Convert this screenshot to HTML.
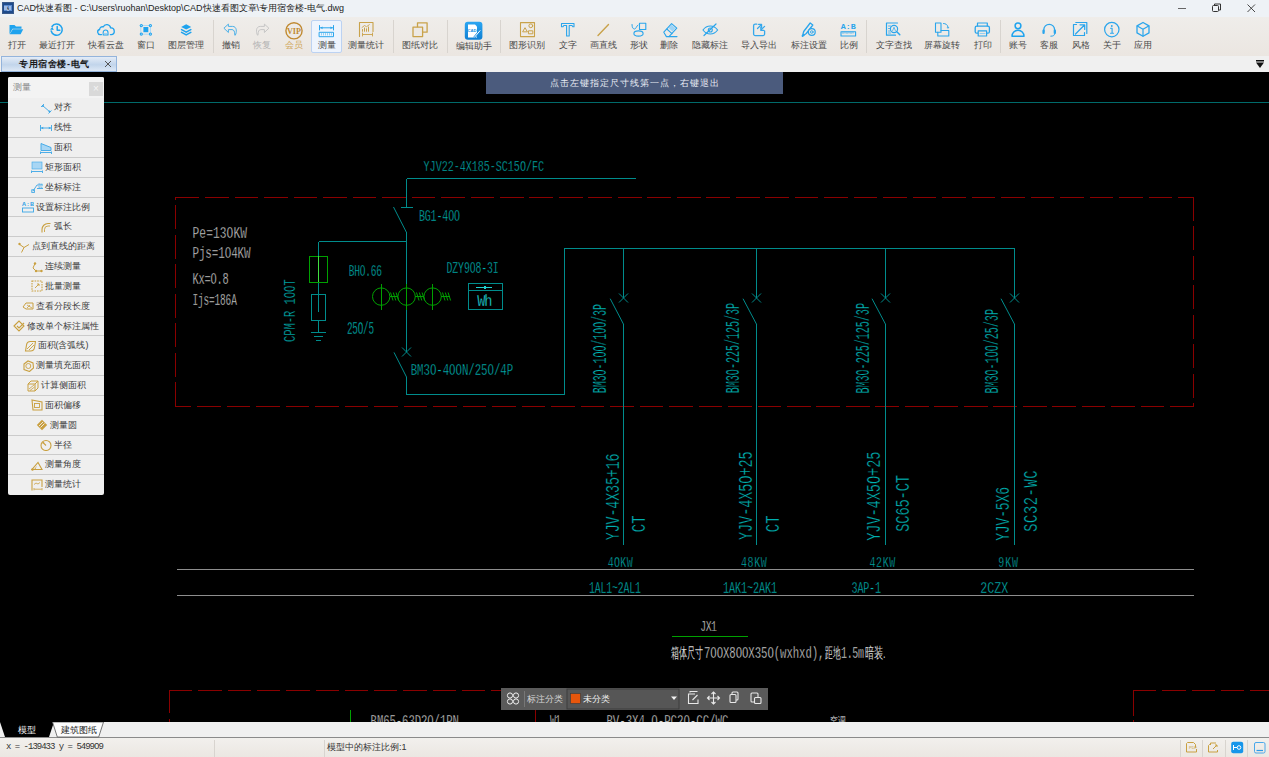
<!DOCTYPE html>
<html><head><meta charset="utf-8">
<style>
*{margin:0;padding:0;box-sizing:border-box}
html,body{width:1269px;height:757px;overflow:hidden;background:#000;font-family:"Liberation Sans",sans-serif}
.abs{position:absolute}
#title{left:0;top:0;width:1269px;height:17px;background:#eef2f6}
#title .t{left:17px;top:2px;font-size:9px;line-height:13px;color:#222;white-space:nowrap}
#tb{left:0;top:17px;width:1269px;height:39px;background:linear-gradient(#efedea,#ebe6e1)}
#tabs{left:0;top:56px;width:1269px;height:16px;background:#f0f0f0}
#canvas{left:0;top:72px;width:1269px;height:650px;background:#000}
.lbl{position:absolute;top:41px;font-size:9px;line-height:9px;color:#4a4a4a;white-space:nowrap;transform:translateX(-50%)}
.sep{position:absolute;top:20px;width:1px;height:33px;background:#d8d4cf}
#active{left:311px;top:20px;width:31px;height:33px;background:#eef4fd;border:1px solid #bcd2f2;border-radius:2px}
#panel{left:8px;top:77px;width:96px;height:418px;background:#efefef;border-radius:2px;overflow:hidden}
#panel .hd{position:absolute;left:0;top:0;width:96px;height:21px;background:#f3f3f3}
#panel .hdt{position:absolute;left:5px;top:6px;font-size:9px;line-height:9px;color:#8a8a8a}
#panel .cls{position:absolute;left:81px;top:5px;width:14px;height:14px;background:#d9d9d9;color:#f4f4f4;font-size:10px;line-height:14px;text-align:center}
#panel .row{position:absolute;left:0;width:96px;height:20px;display:flex;align-items:center;justify-content:center;font-size:9px;line-height:9px;color:#3c3c3c;white-space:nowrap}
#panel .row svg{width:12px;height:12px;margin-right:2px;flex:none}
#btabs{left:0;top:722px;width:1269px;height:16px;background:#f0f0f0;border-bottom:1px solid #8a8a8a}
#status{left:0;top:738px;width:1269px;height:19px;background:linear-gradient(#f2f0ed,#ebe7e2)}
#banner{left:486px;top:72px;width:297px;height:22px;background:#4b5b7d;color:#e8ecf4;font-size:9px;line-height:22px;text-align:center;letter-spacing:1px}
#ftb{left:501px;top:688px;width:267px;height:22px;background:#5a5a5a}
</style></head><body>
<div id="title" class="abs">
  <svg class="abs" style="left:2px;top:2px" width="12" height="12" viewBox="0 0 12 12"><rect x="0.5" y="0.5" width="11" height="11" fill="#1e4a8a" stroke="#3a5a8a"/><rect x="2" y="3" width="8" height="6" fill="#5a8ad0"/><path d="M3 4v4M5 4v4h2M8 4v4" stroke="#fff" stroke-width="0.8"/></svg>
  <div class="t abs">CAD快速看图 - C:\Users\ruohan\Desktop\CAD快速看图文章\专用宿舍楼-电气.dwg</div>
  <svg class="abs" style="left:1170px;top:0" width="99" height="17" viewBox="1170 0 99 17">
    <path d="M1178 8.5h8" stroke="#555" stroke-width="0.9"/>
    <rect x="1212.5" y="5.5" width="6" height="6" rx="1" fill="none" stroke="#333"/>
    <path d="M1214.5 5.5v-1.5h6v6h-1.5" fill="none" stroke="#333"/>
    <path d="M1247.5 4.5l7.5 7.5M1255 4.5l-7.5 7.5" stroke="#333" stroke-width="0.9"/>
  </svg>
</div>
<div id="tb" class="abs"></div>
<div id="tabs" class="abs">
  <div class="abs" style="left:1px;top:0;width:116px;height:16px;border:1px solid #94b4dc;background:linear-gradient(#e4ecf7,#c2d5eb 55%,#dde8f5)"></div>
  <div class="abs" style="left:19px;top:3px;font-size:9px;line-height:10px;color:#1a1a1a;font-weight:bold;letter-spacing:0.6px">专用宿舍楼-电气</div>
  <svg class="abs" style="left:104px;top:4px" width="8" height="8" viewBox="0 0 8 8"><path d="M1 1l6 6M7 1l-6 6" stroke="#555" stroke-width="1"/></svg>
  <svg class="abs" style="left:1255px;top:3px" width="10" height="10" viewBox="0 0 10 10"><rect x="1" y="1" width="8" height="1.5" fill="#111"/><path d="M1 3.5h8l-4 5.5z" fill="#111"/></svg>
</div>
<div id="canvas" class="abs"></div>
<div id="active" class="abs"></div>
<svg class="abs" style="left:0;top:0" width="1269" height="56" viewBox="0 0 1269 56">
<g fill="none" stroke-linecap="round" stroke-linejoin="round">
 <!-- 1 open folder -->
 <path d="M9.5 25h5l1.5 1.5h5.5v2.2h-9L9.5 34z" fill="#1fa3ee"/>
 <path d="M12.8 29.2h10.4l-2.6 5H9.6z" fill="#1fa3ee"/>
 <!-- 2 recent: clock -->
 <path d="M52 26.5A5.6 5.6 0 1 1 51.2 31" stroke="#1fa3ee" stroke-width="1.5"/>
 <path d="M50 29.5l2.4-2.6l1.4 3z" fill="#1fa3ee"/>
 <path d="M57.2 26.6v3.6h2.6" stroke="#1fa3ee" stroke-width="1.5"/>
 <!-- 3 cloud -->
 <path d="M101.5 34.6h-1a2.6 2.6 0 0 1-0.9-5.1a2.8 2.8 0 0 1 3.6-2.6a3.9 3.9 0 0 1 7.4 1a3.3 3.3 0 0 1 0.6 6.7h-0.8" stroke="#1fa3ee" stroke-width="1.3"/>
 <path d="M103.2 35v-2.6a2.4 2.4 0 0 1 4.8 0v2.6z" stroke="#1fa3ee" stroke-width="1.1"/>
 <path d="M103.5 33.6h4.3" stroke="#7cc8f4" stroke-width="0.8"/>
 <!-- 4 window -->
 <rect x="143.4" y="27" width="4.9" height="5.2" fill="#1fa3ee"/>
 <path d="M141.2 25.5h9.3v8.7h-9.3z" stroke="#a6d8f6" stroke-width="0.9"/>
 <circle cx="141.3" cy="25.6" r="1.6" fill="#1fa3ee"/><circle cx="141.3" cy="25.6" r="0.6" fill="#bfe4fa"/><circle cx="150.4" cy="25.6" r="1.6" fill="#1fa3ee"/><circle cx="150.4" cy="25.6" r="0.6" fill="#bfe4fa"/>
 <circle cx="141.3" cy="34.1" r="1.6" fill="#1fa3ee"/><circle cx="141.3" cy="34.1" r="0.6" fill="#bfe4fa"/><circle cx="150.4" cy="34.1" r="1.6" fill="#1fa3ee"/><circle cx="150.4" cy="34.1" r="0.6" fill="#bfe4fa"/>
 <!-- 5 layers -->
 <path d="M186.2 24.2l5 2.7l-5 2.7l-5-2.7z" fill="#1fa3ee"/>
 <path d="M181.6 29.6l4.6 2.5l4.6-2.5" stroke="#1fa3ee" stroke-width="1.6"/>
 <path d="M181.6 32.4l4.6 2.5l4.6-2.5" stroke="#1fa3ee" stroke-width="1.6"/>
 <!-- sep 213 -->
 <!-- 6 undo -->
 <path d="M235.5 34.8C236.8 32.5 237.2 26.4 232.5 26.4H228.4V24.1L223.9 28.2L228.4 32.5V29.6H232C234 29.6 234.8 31.5 234.8 34.8Z" stroke="#45aee8" stroke-width="0.95"/>
 <!-- 7 redo grey -->
 <path d="M257.3 34.8C256 32.5 255.6 26.4 260.3 26.4H264.4V24.1L268.9 28.2L264.4 32.5V29.6H260.8C258.8 29.6 258 31.5 258 34.8Z" stroke="#c4c4c4" stroke-width="0.95"/>
 <!-- 8 VIP -->
 <circle cx="294" cy="30.8" r="8.1" stroke="#c08a32" stroke-width="1.4"/>
 <text x="294" y="34.2" font-family="Liberation Serif" font-weight="bold" font-size="9" fill="#c08a32" text-anchor="middle" stroke="none" textLength="14" lengthAdjust="spacingAndGlyphs">VIP</text>
 <!-- 9 measure -->
 <path d="M319.5 25.5v4.5M333.5 25.5v4.5M320 27.8h13" stroke="#2aa5ec" stroke-width="1"/>
 <path d="M320.5 27.8l2-1.4v2.8zM332.5 27.8l-2-1.4v2.8z" fill="#2aa5ec"/>
 <rect x="319.5" y="32.3" width="14" height="4.4" stroke="#2aa5ec" stroke-width="1"/>
 <path d="M321.5 33.5v1.5M323.5 33.5v1.5M325.5 33.5v1.5M327.5 33.5v1.5M329.5 33.5v1.5M331.5 33.5v1.5" stroke="#7cc6f2" stroke-width="0.8"/>
 <!-- 10 measure stats -->
 <path d="M359.5 36.5v-14h13.5v9" stroke="#c9a24a" stroke-width="1.1"/>
 <path d="M362.5 29.5v1.8M364.5 28v3.3M366.5 28.8v2.5M368.5 27v4.3" stroke="#c9a24a" stroke-width="1"/>
 <path d="M362 27.5l2.5-2l2 1.2l2.8-2" stroke="#c9a24a" stroke-width="0.9"/>
 <path d="M362.5 33v3M372.5 33v3M363 34.5h9" stroke="#c9a24a" stroke-width="0.9"/>
 <!-- sep 393.5 -->
 <!-- 11 compare -->
 <rect x="417.5" y="22.8" width="9.6" height="9.4" stroke="#c9a24a" stroke-width="1.3"/>
 <rect x="413" y="27.2" width="9.6" height="9.4" fill="#ede9e4" stroke="#c9a24a" stroke-width="1.3"/>
 <!-- sep 447.5 -->
 <!-- 12 edit helper -->
 <defs><linearGradient id="gb" x1="0" y1="0" x2="0" y2="1"><stop offset="0" stop-color="#2ba6f2"/><stop offset="1" stop-color="#0f7fd2"/></linearGradient></defs>
 <rect x="464.8" y="21.8" width="17.6" height="18" rx="3" fill="url(#gb)"/>
 <path d="M468 24.5h7l2 2v11h-9z" fill="#fff"/>
 <text x="472" y="32" font-size="4.2" font-weight="bold" fill="#1a8ee0" text-anchor="middle" stroke="none">CAD</text>
 <path d="M474.5 37.2l5.5-6.5" stroke="#1a8ee0" stroke-width="2.2"/>
 <path d="M474.5 37.2l5.5-6.5" stroke="#fff" stroke-width="1"/>
 <!-- sep 500.5 -->
 <!-- 13 shape recog -->
 <rect x="520.5" y="22.6" width="14" height="14" stroke="#c9a24a" stroke-width="1.1"/>
 <path d="M522.8 31.5l2.2-3.8l2.2 3.8z" stroke="#c9a24a" stroke-width="1"/>
 <circle cx="530.8" cy="25.8" r="1.9" stroke="#c9a24a" stroke-width="1"/>
 <rect x="528.8" y="30.8" width="4" height="3" stroke="#c9a24a" stroke-width="1"/>
 <!-- 14 T -->
 <path d="M561.5 23.5h12.5v3.2h-1.2l-0.8-1.2h-2.8v10.5h-2.6v-10.5h-2.8l-0.8 1.2h-1.5z" stroke="#2aa5ec" stroke-width="1.1"/>
 <!-- 15 line -->
 <path d="M598 35.5l10.5-11" stroke="#c9a24a" stroke-width="1.4"/>
 <!-- 16 shapes -->
 <rect x="639.5" y="23.2" width="6.3" height="6.3" stroke="#2aa5ec" stroke-width="1.1"/>
 <ellipse cx="638.5" cy="33.5" rx="4.6" ry="2.6" fill="#ede9e4" stroke="#2aa5ec" stroke-width="1.1"/>
 <path d="M632 24.5c0 3 1 4.5 2.5 4.5c1.5 0 2-3 3.5-4" stroke="#2aa5ec" stroke-width="1"/>
 <!-- 17 eraser -->
 <path d="M663.8 32.2l7.8-8.6l5.2 4.6l-7.8 8.4h-2.6z" stroke="#2aa5ec" stroke-width="1.1"/>
 <path d="M666.8 29l5.2 4.6M669 36.6h8" stroke="#2aa5ec" stroke-width="1.1"/>
 <path d="M671.6 24.8l3.8 3.4l-3 3.2l-3.8-3.4z" fill="#9ed4f6"/>
 <!-- 18 hide annotation eye -->
 <path d="M703 30c2-2.8 4.5-4 7.3-4s5.3 1.2 7.3 4c-2 2.8-4.5 4-7.3 4s-5.3-1.2-7.3-4z" stroke="#2aa5ec" stroke-width="1.2"/>
 <circle cx="710.3" cy="30" r="2" stroke="#2aa5ec" stroke-width="1.1"/>
 <path d="M704 35.5l12-11.5" stroke="#2aa5ec" stroke-width="1.2"/>
 <!-- 19 import export -->
 <path d="M756.8 24.2H755.2a1.6 1.6 0 0 0-1.6 1.6V34a1.6 1.6 0 0 0 1.6 1.6H763a1.6 1.6 0 0 0 1.6-1.6V31" stroke="#35a8ec" stroke-width="1.3"/>
 <path d="M757.5 28.5L761.5 24.5M758.5 24.3H761.6V27.4" stroke="#35a8ec" stroke-width="1.2"/>
 <path d="M764.6 26.3L761 29.9M760.8 27.2V30.4H763.8" stroke="#35a8ec" stroke-width="1.2"/>
 <!-- 20 annotation settings: pen + gear -->
 <path d="M802.5 36l1.2-4.5l6.5-8.5l2.6 2l-6.5 8.5z" stroke="#2aa5ec" stroke-width="1.3"/>
 <path d="M802.5 36l1.3-1" stroke="#2aa5ec" stroke-width="1.8"/>
 <circle cx="811.8" cy="32" r="3.4" fill="#ede9e4" stroke="#2aa5ec" stroke-width="1.2"/>
 <circle cx="811.8" cy="32" r="1.3" stroke="#2aa5ec" stroke-width="0.9"/>
 <!-- 21 scale A:B -->
 <text x="848.3" y="29.2" font-family="Liberation Mono" font-weight="bold" font-size="7" fill="#2aa5ec" stroke="none" text-anchor="middle" textLength="15" lengthAdjust="spacingAndGlyphs">A:B</text>
 <rect x="841" y="31.8" width="14.6" height="4.2" stroke="#2aa5ec" stroke-width="1.1"/>
 <path d="M843 32v1.6M845 32v1.2M847 32v1.6M849 32v1.2M851 32v1.6M853 32v1.2" stroke="#2aa5ec" stroke-width="0.7"/>
 <!-- sep 866.5 -->
 <!-- 22 text find -->
 <path d="M897.5 23h-11v12.2h9" stroke="#2aa5ec" stroke-width="1.2"/>
 <path d="M888.5 26h2M888.5 28.5h1.5M888.5 31h1.5M888.5 33h2" stroke="#2aa5ec" stroke-width="0.8"/>
 <circle cx="894" cy="29" r="3.6" stroke="#2aa5ec" stroke-width="1.2"/>
 <path d="M896.8 31.8l3 3" stroke="#2aa5ec" stroke-width="1.5"/>
 <path d="M892.6 30.8l1.4-3.6l1.4 3.6" stroke="#2aa5ec" stroke-width="0.7"/>
 <!-- 23 screen rotate -->
 <rect x="935.5" y="23" width="5.5" height="9.3" stroke="#2aa5ec" stroke-width="1.1"/>
 <path d="M941 30.5h7.8v5.5h-11v-3.7" stroke="#2aa5ec" stroke-width="1.1"/>
 <path d="M943.5 23.5c2 0 4 1 4.5 3.5" stroke="#2aa5ec" stroke-width="1"/>
 <path d="M946.5 27.5l1.6 1.3l1.3-1.8z" fill="#2aa5ec"/>
 <!-- 24 print -->
 <path d="M977.5 26v-3h9.8v3" stroke="#2aa5ec" stroke-width="1.2"/>
 <rect x="975.2" y="26.2" width="14.2" height="7" rx="1.5" stroke="#2aa5ec" stroke-width="1.3"/>
 <rect x="978.2" y="30.8" width="8.4" height="5.2" fill="#ede9e4" stroke="#2aa5ec" stroke-width="1.2"/>
 <path d="M980 33.5h5" stroke="#7cc6f2" stroke-width="0.8"/>
 <!-- sep 1000 -->
 <!-- 25 account -->
 <circle cx="1018" cy="25.8" r="2.9" stroke="#1fa3ee" stroke-width="1.5"/>
 <path d="M1012 36.3c0-3.4 2.6-6 6-6s6 2.6 6 6z" stroke="#1fa3ee" stroke-width="1.5"/>
 <!-- 26 service headset -->
 <path d="M1043.8 31.5v-1.8a5.4 5.4 0 0 1 10.8 0v1.8" stroke="#2aa5ec" stroke-width="1.3"/>
 <rect x="1042.4" y="29.6" width="2.3" height="4.4" rx="1.1" fill="#2aa5ec"/>
 <rect x="1053.7" y="29.6" width="2.3" height="4.4" rx="1.1" fill="#2aa5ec"/>
 <path d="M1054.6 34c0 1.6-1.4 2.2-3.8 2.2" stroke="#2aa5ec" stroke-width="1"/>
 <!-- 27 style -->
 <path d="M1076.5 24.5h-3v11h11v-3" stroke="#2aa5ec" stroke-width="1.2"/>
 <path d="M1075.8 22.5h11v11" stroke="#2aa5ec" stroke-width="1.2"/>
 <path d="M1075.5 34l9-9M1080 24.8h4.7v4.7" stroke="#2aa5ec" stroke-width="1.2"/>
 <!-- 28 about -->
 <circle cx="1111.8" cy="29.6" r="7.2" stroke="#2aa5ec" stroke-width="1.2"/>
 <circle cx="1111.8" cy="26" r="0.9" fill="#2aa5ec"/>
 <path d="M1110.6 28.3h1.5v5M1110.5 33.3h3" stroke="#2aa5ec" stroke-width="1.1"/>
 <!-- 29 app cube -->
 <path d="M1143 22.5l6 3.4v7l-6 3.4l-6-3.4v-7z" stroke="#2aa5ec" stroke-width="1.3"/>
 <path d="M1137.3 26l5.7 3.2l5.7-3.2M1143 29.2v6.8" stroke="#2aa5ec" stroke-width="1.2"/>
</g>
</svg>
<div class="sep" style="left:213px"></div>
<div class="sep" style="left:393px"></div>
<div class="sep" style="left:447px"></div>
<div class="sep" style="left:500px"></div>
<div class="sep" style="left:866px"></div>
<div class="sep" style="left:1000px"></div>
<div class="lbl" style="left:16.5px">打开</div>
<div class="lbl" style="left:56.8px">最近打开</div>
<div class="lbl" style="left:105.7px">快看云盘</div>
<div class="lbl" style="left:146px">窗口</div>
<div class="lbl" style="left:186.4px">图层管理</div>
<div class="lbl" style="left:230.6px">撤销</div>
<div class="lbl" style="left:261.6px;color:#b4b4b4">恢复</div>
<div class="lbl" style="left:293.6px;color:#d0a860">会员</div>
<div class="lbl" style="left:326.5px">测量</div>
<div class="lbl" style="left:366.4px">测量统计</div>
<div class="lbl" style="left:420px">图纸对比</div>
<div class="lbl" style="left:473.5px;top:42px">编辑助手</div>
<div class="lbl" style="left:527px">图形识别</div>
<div class="lbl" style="left:567.6px">文字</div>
<div class="lbl" style="left:603px">画直线</div>
<div class="lbl" style="left:638.6px">形状</div>
<div class="lbl" style="left:669.3px">删除</div>
<div class="lbl" style="left:710px">隐藏标注</div>
<div class="lbl" style="left:759.4px">导入导出</div>
<div class="lbl" style="left:808.6px">标注设置</div>
<div class="lbl" style="left:849px">比例</div>
<div class="lbl" style="left:893.5px">文字查找</div>
<div class="lbl" style="left:942px">屏幕旋转</div>
<div class="lbl" style="left:982.5px">打印</div>
<div class="lbl" style="left:1017.9px">账号</div>
<div class="lbl" style="left:1049.2px">客服</div>
<div class="lbl" style="left:1080.5px">风格</div>
<div class="lbl" style="left:1111.7px">关于</div>
<div class="lbl" style="left:1142.9px">应用</div>
<svg class="abs" style="left:0;top:72px" width="1269" height="650" viewBox="0 72 1269 650" shape-rendering="crispEdges">
<g fill="none" stroke-width="1">
 <path d="M0 102.5H1269" stroke="#006a6a"/>
 <g stroke="#8a0000" stroke-dasharray="23.6 5.89">
  <path d="M175 197.5H1194" stroke-dashoffset="-0.6"/>
  <path d="M1193.5 197V406"/>
  <path d="M175 406.5H1194" stroke-dashoffset="7.3"/>
  <path d="M175.5 406V197"/>
 </g>
 <g stroke="#8a0000" stroke-dasharray="23.3 6">
  <path d="M169 690.5H520"/>
  <path d="M169.5 690V722"/>
  <path d="M1133 690.5H1269"/>
  <path d="M1133.5 690V722" stroke-dasharray="26 4"/>
 </g>
 <path d="M535.5 710V722" stroke="#8a0000"/>
 <path d="M350.5 710V722" stroke="#00a000"/>
 <path d="M177 569.5H1194M177 595.5H1194" stroke="#8e8e8e"/>
 <path d="M672 636.5H748" stroke="#00a000"/>
 <g stroke="#008c8c">
  <path d="M406.5 178.5H635.5M406.5 178.5V207.5M401 207.5H413"/>
  <path d="M406.5 232V352M406.5 377V394.5H564.5V248.5H1014.5V298"/>
  <path d="M318.5 241.5H406.5M318.5 241.5V256"/>
  <path d="M318.5 282V312M318.5 320V332.5"/>
  <rect x="311.5" y="294.5" width="14" height="26"/>
  <path d="M311 332.5H326M314 336.5H323M316 340.5H321"/>
  <path d="M623.5 248.5V298M623.5 324V545M756.5 248.5V298M756.5 324V545M885.5 248.5V298M885.5 324V545M1014.5 324V545"/>
  <path d="M468.5 283.5H502.5V309.5H468.5ZM468.5 290.5H502.5"/>
 </g>
 <g stroke="#008c8c" shape-rendering="auto">
  <path d="M393.5 207L406.5 232.5"/>
  <path d="M394 352.4L406.5 377"/>
  <path d="M402 347.5L411 356.5M411 347.5L402 356.5"/>
  <path d="M610.2 298.7L623.5 324.2M619 293.5L628 302.5M628 293.5L619 302.5"/>
  <path d="M743 298.7L756.5 324.2M752 293.5L761 302.5M761 293.5L752 302.5"/>
  <path d="M872 298.7L885.5 324.2M881 293.5L890 302.5M890 293.5L881 302.5"/>
  <path d="M1001 298.7L1014.5 324.2M1010 293.5L1019 302.5M1019 293.5L1010 302.5"/>
 </g>
 <path d="M476 287.5H492" stroke="#20d0d0"/>
 <circle cx="485" cy="287.5" r="1.2" fill="#20d0d0" stroke="none"/>
 <g stroke="#00a000">
  <rect x="309.5" y="256.5" width="18" height="26"/>
  <path d="M381.5 284V310M432.5 284V310"/>
  <path d="M390 296.5H398M415 296.5H424M441 296.5H450"/>
 </g>
 <path d="M318.5 256V282" stroke="#40e040"/>
 <path d="M406.5 284V310" stroke="#00a000"/>
 <g stroke="#00a000" shape-rendering="auto">
  <circle cx="381.2" cy="296.6" r="8.7"/>
  <circle cx="406.6" cy="296.6" r="8.7"/>
  <circle cx="432.6" cy="296.6" r="8.7"/>
  <path d="M390.5 292.5l2.5 8M393.3 292.5l2.5 8M396.1 292.5l2.5 8"/>
  <path d="M416.5 292.5l2.5 8M419.3 292.5l2.5 8M422.1 292.5l2.5 8"/>
  <path d="M442.5 292.5l2.5 8M445.3 292.5l2.5 8M448.1 292.5l2.5 8"/>
 </g>
</g>
<g font-family="Liberation Mono" shape-rendering="auto">
<g transform="translate(423.6 171) scale(0.6667529411764707 1)"><text font-size="15.17" textLength="180.58" lengthAdjust="spacing" fill="#00b0b0" stroke="#000" stroke-width="0.35">YJV22-4X185-SC15O/FC</text></g>
<g transform="translate(418.9 220.7) scale(0.6413663272555055 1)"><text font-size="15.63" textLength="64.08" lengthAdjust="spacing" fill="#00b0b0" stroke="#000" stroke-width="0.35">BG1-4OO</text></g>
<g transform="translate(348.7 276) scale(0.6028763736263737 1)"><text font-size="15.78" textLength="55.24" lengthAdjust="spacing" fill="#00b0b0" stroke="#000" stroke-width="0.35">BHO.66</text></g>
<g transform="translate(347 334) scale(0.5335232383808096 1)"><text font-size="17.45" textLength="50.61" lengthAdjust="spacing" fill="#00b0b0" stroke="#000" stroke-width="0.35">25O/5</text></g>
<g transform="translate(446.6 273.3) scale(0.5877873070325901 1)"><text font-size="16.69" textLength="88.47" lengthAdjust="spacing" fill="#00b0b0" stroke="#000" stroke-width="0.35">DZY9O8-3I</text></g>
<g transform="translate(477.3 305.8) scale(0.8 1)"><text font-size="17.00" textLength="18.88" lengthAdjust="spacing" fill="#20d8d8" stroke="#000" stroke-width="0.25">Wh</text></g>
<g transform="translate(410.7 375) scale(0.6463875598086125 1)"><text font-size="16.69" textLength="158.57" lengthAdjust="spacing" fill="#00b0b0" stroke="#000" stroke-width="0.35">BM3O-4OON/25O/4P</text></g>
<g transform="translate(607.7 567) scale(0.7 1)"><text font-size="14.26" textLength="35.71" lengthAdjust="spacing" fill="#00b0b0" stroke="#000" stroke-width="0.35">4OKW</text></g>
<g transform="translate(741 567) scale(0.7 1)"><text font-size="14.26" textLength="36.71" lengthAdjust="spacing" fill="#00b0b0" stroke="#000" stroke-width="0.35">48KW</text></g>
<g transform="translate(869.5 567) scale(0.7 1)"><text font-size="14.26" textLength="36.86" lengthAdjust="spacing" fill="#00b0b0" stroke="#000" stroke-width="0.35">42KW</text></g>
<g transform="translate(998.3 567) scale(0.7 1)"><text font-size="14.26" textLength="28.14" lengthAdjust="spacing" fill="#00b0b0" stroke="#000" stroke-width="0.35">9KW</text></g>
<g transform="translate(589 592.8) scale(0.5877873070325901 1)"><text font-size="16.69" textLength="88.47" lengthAdjust="spacing" fill="#00b0b0" stroke="#000" stroke-width="0.35">1AL1~2AL1</text></g>
<g transform="translate(723 592.8) scale(0.6103945111492282 1)"><text font-size="16.69" textLength="88.47" lengthAdjust="spacing" fill="#00b0b0" stroke="#000" stroke-width="0.35">1AK1~2AK1</text></g>
<g transform="translate(851.6 592.8) scale(0.6073542319749216 1)"><text font-size="16.69" textLength="48.41" lengthAdjust="spacing" fill="#00b0b0" stroke="#000" stroke-width="0.35">3AP-1</text></g>
<g transform="translate(980.3 592.8) scale(0.7 1)"><text font-size="16.69" textLength="39.86" lengthAdjust="spacing" fill="#00b0b0" stroke="#000" stroke-width="0.35">2CZX</text></g>
<g transform="translate(295.3 342) rotate(-90) scale(0.6356456086286594 1)"><text font-size="16.69" textLength="98.48" lengthAdjust="spacing" fill="#00b0b0" stroke="#000" stroke-width="0.35">CPM-R 1OOT</text></g>
<g transform="translate(606 393.2) rotate(-90) scale(0.5080622299049266 1)"><text font-size="19.73" textLength="175.57" lengthAdjust="spacing" fill="#00b0b0" stroke="#000" stroke-width="0.35">BM3O-1OO/1OO/3P</text></g>
<g transform="translate(739.3 393.2) rotate(-90) scale(0.5148971477960242 1)"><text font-size="19.73" textLength="175.57" lengthAdjust="spacing" fill="#00b0b0" stroke="#000" stroke-width="0.35">BM3O-225/125/3P</text></g>
<g transform="translate(868.9 393.5) rotate(-90) scale(0.5154667242869491 1)"><text font-size="19.73" textLength="175.57" lengthAdjust="spacing" fill="#00b0b0" stroke="#000" stroke-width="0.35">BM3O-225/125/3P</text></g>
<g transform="translate(998 393.5) rotate(-90) scale(0.5160843373493976 1)"><text font-size="19.73" textLength="163.73" lengthAdjust="spacing" fill="#00b0b0" stroke="#000" stroke-width="0.35">BM3O-1OO/25/3P</text></g>
<g transform="translate(618.5 540.2) rotate(-90) scale(0.6769372781065089 1)"><text font-size="19.73" textLength="128.22" lengthAdjust="spacing" fill="#00b0b0" stroke="#000" stroke-width="0.35">YJV-4X35+16</text></g>
<g transform="translate(645.3 532.2) rotate(-90) scale(0.7 1)"><text font-size="19.73" textLength="23.86" lengthAdjust="spacing" fill="#00b0b0" stroke="#000" stroke-width="0.35">CT</text></g>
<g transform="translate(752 540) rotate(-90) scale(0.6917550295857989 1)"><text font-size="19.73" textLength="128.22" lengthAdjust="spacing" fill="#00b0b0" stroke="#000" stroke-width="0.35">YJV-4X5O+25</text></g>
<g transform="translate(779.2 532.2) rotate(-90) scale(0.7 1)"><text font-size="19.73" textLength="23.86" lengthAdjust="spacing" fill="#00b0b0" stroke="#000" stroke-width="0.35">CT</text></g>
<g transform="translate(880.3 540.8) rotate(-90) scale(0.6964343195266274 1)"><text font-size="19.73" textLength="128.22" lengthAdjust="spacing" fill="#00b0b0" stroke="#000" stroke-width="0.35">YJV-4X5O+25</text></g>
<g transform="translate(908.5 531.8) rotate(-90) scale(0.7 1)"><text font-size="19.73" textLength="81.29" lengthAdjust="spacing" fill="#00b0b0" stroke="#000" stroke-width="0.35">SC65-CT</text></g>
<g transform="translate(1009 540.8) rotate(-90) scale(0.6664183864915573 1)"><text font-size="19.73" textLength="80.88" lengthAdjust="spacing" fill="#00b0b0" stroke="#000" stroke-width="0.35">YJV-5X6</text></g>
<g transform="translate(1037.2 531.8) rotate(-90) scale(0.7 1)"><text font-size="19.73" textLength="87.71" lengthAdjust="spacing" fill="#00b0b0" stroke="#000" stroke-width="0.35">SC32-WC</text></g>
<g transform="translate(192.5 237.6) scale(0.7 1)"><text font-size="16.08" textLength="77.86" lengthAdjust="spacing" fill="#cfcfcf" stroke="#000" stroke-width="0.35">Pe=13OKW</text></g>
<g transform="translate(192.5 257.8) scale(0.7 1)"><text font-size="15.63" textLength="83.00" lengthAdjust="spacing" fill="#cfcfcf" stroke="#000" stroke-width="0.35">Pjs=1O4KW</text></g>
<g transform="translate(192.5 284) scale(0.6328492063492064 1)"><text font-size="16.39" textLength="57.36" lengthAdjust="spacing" fill="#cfcfcf" stroke="#000" stroke-width="0.35">Kx=O.8</text></g>
<g transform="translate(192.5 305.1) scale(0.5698555533866876 1)"><text font-size="16.54" textLength="77.74" lengthAdjust="spacing" fill="#cfcfcf" stroke="#000" stroke-width="0.35">Ijs=186A</text></g>
<g transform="translate(700.3 631.4) scale(0.6332847990681423 1)"><text font-size="15.33" textLength="26.05" lengthAdjust="spacing" fill="#d8d8d8" stroke="#000" stroke-width="0.35">JX1</text></g>
<g transform="translate(704 658) scale(0.6388535800482703 1)"><text font-size="16.69" textLength="188.62" lengthAdjust="spacing" fill="#d8d8d8" stroke="#000" stroke-width="0.35">7OOX8OOX35O(wxhxd),</text></g>
<g transform="translate(841 658) scale(0.5990909090909091 1)"><text font-size="16.69" textLength="38.39" lengthAdjust="spacing" fill="#d8d8d8" stroke="#000" stroke-width="0.35">1.5m</text></g>
<g transform="translate(370.6 726) scale(0.6373461117196056 1)"><text font-size="16.69" textLength="138.54" lengthAdjust="spacing" fill="#cfcfcf" stroke="#000" stroke-width="0.35">BM65-63D2O/1PN</text></g>
<g transform="translate(550 726) scale(0.588198347107438 1)"><text font-size="16.69" textLength="18.36" lengthAdjust="spacing" fill="#cfcfcf" stroke="#000" stroke-width="0.35">W1</text></g>
<g transform="translate(606.4 726) scale(0.6468061142397425 1)"><text font-size="16.69" textLength="188.62" lengthAdjust="spacing" fill="#cfcfcf" stroke="#000" stroke-width="0.35">BV-3X4.O-PC2O-CC/WC</text></g>
</g>
<g font-family="Liberation Sans" fill="#d8d8d8">
<g transform="translate(671.3 657.5) scale(0.55 1)"><text font-size="14.5" textLength="58.2" lengthAdjust="spacingAndGlyphs">箱体尺寸</text></g>
<g transform="translate(825.4 657.5) scale(0.55 1)"><text font-size="14.5" textLength="28" lengthAdjust="spacingAndGlyphs">距地</text></g>
<g transform="translate(864.5 657.5) scale(0.55 1)"><text font-size="14.5" textLength="38" lengthAdjust="spacingAndGlyphs">暗装.</text></g>
<text x="830.3" y="723" font-size="9" textLength="15.5" lengthAdjust="spacingAndGlyphs" fill="#cfcfcf">空调</text>
</g>
</svg>
<div id="banner" class="abs">点击左键指定尺寸线第一点，右键退出</div>
<div id="panel" class="abs">
<div class="hd"></div><div class="hdt">测量</div><div class="cls">×</div>
<div class="row" style="top:20.7px"><svg viewBox="0 0 12 12"><g stroke="#3aa6e6" fill="none" stroke-width="0.9"><path d="M2.5 3.5l7.5 6.5"/><path d="M1 5l3-3M8.5 11.5l3-3"/></g><circle cx="3" cy="4" r="1" fill="#3aa6e6"/><circle cx="9.5" cy="9.5" r="1" fill="#3aa6e6"/></svg><span>对齐</span></div>
<div class="row" style="top:40.7px"><svg viewBox="0 0 12 12"><g stroke="#3aa6e6" fill="none" stroke-width="0.9"><path d="M0.5 3v6M11.5 3v6M1 6h10"/></g><path d="M1 6l2.2-1.3v2.6zM11 6l-2.2-1.3v2.6z" fill="#3aa6e6"/></svg><span>线性</span></div>
<div class="row" style="top:60.5px"><svg viewBox="0 0 12 12"><path d="M1 1.5l10 4v3h-10z" fill="#a8d6f4" stroke="#3aa6e6" stroke-width="0.9"/><path d="M1 10.5h10M0.5 9.5v2.5M11.5 9.5v2.5" stroke="#3aa6e6" stroke-width="0.9"/></svg><span>面积</span></div>
<div class="row" style="top:80.4px"><svg viewBox="0 0 12 12"><rect x="1" y="1" width="10" height="7" fill="#a8d6f4" stroke="#3aa6e6" stroke-width="0.6"/><path d="M1 10.5h10M0.5 9.5v2.5M11.5 9.5v2.5" stroke="#3aa6e6" stroke-width="0.9"/></svg><span>矩形面积</span></div>
<div class="row" style="top:100.2px"><svg viewBox="0 0 12 12"><g stroke="#3aa6e6" fill="none" stroke-width="0.9"><path d="M2 10l4-6h6M6 7.5h6"/><rect x="0.8" y="8.8" width="2.6" height="2.6"/></g><text x="7" y="4" font-size="4" fill="#3aa6e6">x=</text><text x="7" y="7.3" font-size="4" fill="#3aa6e6">y=</text></svg><span>坐标标注</span></div>
<div class="row" style="top:120.0px"><svg viewBox="0 0 12 12"><text x="6" y="5" font-family="Liberation Mono" font-weight="bold" font-size="6" fill="#3aa6e6" text-anchor="middle" textLength="12" lengthAdjust="spacingAndGlyphs">A:B</text><rect x="0.5" y="7" width="11" height="4" fill="none" stroke="#3aa6e6" stroke-width="0.9"/></svg><span>设置标注比例</span></div>
<div class="row" style="top:139.9px"><svg viewBox="0 0 12 12"><path d="M2 11.5v-3a6 6 0 0 1 6-6h2.5" stroke="#c9a040" fill="none" stroke-width="1.1"/><path d="M4.5 11v-2.5a3.5 3.5 0 0 1 3.5-3.5h2" stroke="#c9a040" fill="none" stroke-width="0.9"/></svg><span>弧长</span></div>
<div class="row" style="top:159.7px"><svg viewBox="0 0 12 12"><path d="M1 3l5 3.5l5-3M6 6.5l-2.5 5" stroke="#c9a040" fill="none" stroke-width="1"/><circle cx="1.5" cy="3" r="1.2" fill="#c9a040"/></svg><span>点到直线的距离</span></div>
<div class="row" style="top:179.5px"><svg viewBox="0 0 12 12"><path d="M4 2.5l-2 4.5l3 3h5" stroke="#c9a040" fill="none" stroke-width="1"/><circle cx="4" cy="2.5" r="1.2" fill="#c9a040"/><circle cx="5" cy="10" r="1.2" fill="#c9a040"/><circle cx="10.5" cy="10" r="1.2" fill="#c9a040"/></svg><span>连续测量</span></div>
<div class="row" style="top:199.4px"><svg viewBox="0 0 12 12"><rect x="1" y="1" width="10" height="10" fill="none" stroke="#c9a040" stroke-width="1.1" stroke-dasharray="1.6 1"/><path d="M4 8l4-4M6 4h2v2" stroke="#c9a040" fill="none" stroke-width="0.9"/></svg><span>批量测量</span></div>
<div class="row" style="top:219.2px"><svg viewBox="0 0 12 12"><path d="M1 7l3-4h7v6h-7z" fill="none" stroke="#c9a040" stroke-width="1"/><path d="M5 5l5 3M5 8l3-3" stroke="#c9a040" stroke-width="0.8"/></svg><span>查看分段长度</span></div>
<div class="row" style="top:239.0px"><svg viewBox="0 0 12 12"><path d="M1 6l5-5l5 5l-5 5z" fill="none" stroke="#c9a040" stroke-width="1.1"/><path d="M4 6l2 2l5-5" stroke="#c9a040" fill="none" stroke-width="1.1"/></svg><span>修改单个标注属性</span></div>
<div class="row" style="top:258.8px"><svg viewBox="0 0 12 12"><path d="M1.5 11l1-6a4 4 0 0 1 4-3.5h5l-1 6a4 4 0 0 1-4 3.5z" fill="none" stroke="#c9a040" stroke-width="1.1"/><path d="M3 9l6-6M5 10l5-5" stroke="#c9a040" stroke-width="0.9"/></svg><span>面积(含弧线)</span></div>
<div class="row" style="top:278.7px"><svg viewBox="0 0 12 12"><path d="M2 4l4-3l5 2l0.5 5l-4 3.5l-5.5-2z" fill="none" stroke="#c9a040" stroke-width="1.1"/><circle cx="6.3" cy="6" r="2.5" fill="none" stroke="#c9a040" stroke-width="0.9"/></svg><span>测量填充面积</span></div>
<div class="row" style="top:298.5px"><svg viewBox="0 0 12 12"><path d="M1 4l3-3h7v7l-3 3h-7z M1 4h7v7M8 4l3-3" fill="none" stroke="#c9a040" stroke-width="1"/><path d="M2 9l5-4M3 10.5l4.5-3.5" stroke="#c9a040" stroke-width="0.8"/></svg><span>计算侧面积</span></div>
<div class="row" style="top:318.3px"><svg viewBox="0 0 12 12"><path d="M1 1l10 2v8h-9z" fill="none" stroke="#c9a040" stroke-width="1.1"/><rect x="3.5" y="4.5" width="5" height="4" fill="none" stroke="#c9a040" stroke-width="0.9"/></svg><span>面积偏移</span></div>
<div class="row" style="top:338.2px"><svg viewBox="0 0 12 12"><path d="M6 0.8l5.2 5.2l-5.2 5.2l-5.2-5.2z" fill="#c9a040"/><path d="M3 7l4-4M4.5 8.5l4-4" stroke="#efefef" stroke-width="0.9"/></svg><span>测量圆</span></div>
<div class="row" style="top:358.0px"><svg viewBox="0 0 12 12"><circle cx="6" cy="6.5" r="5" fill="none" stroke="#c9a040" stroke-width="1.1"/><path d="M6 6.5l-3-3" stroke="#c9a040" stroke-width="1.1"/><path d="M2.5 3l2 0.2l-1.8 1.8z" fill="#c9a040"/></svg><span>半径</span></div>
<div class="row" style="top:377.8px"><svg viewBox="0 0 12 12"><path d="M1 10.5h10l-4-7z" fill="none" stroke="#c9a040" stroke-width="1.1"/><path d="M4 10.5a3 3 0 0 1 1.5-2.6" stroke="#c9a040" fill="none" stroke-width="0.9"/><circle cx="1.5" cy="10.5" r="1.2" fill="#c9a040"/></svg><span>测量角度</span></div>
<div class="row" style="top:397.6px"><svg viewBox="0 0 12 12"><path d="M1 11.5v-10.5h10v7" fill="none" stroke="#c9a040" stroke-width="1.1"/><path d="M3 5.5l2-1.5l2 1l2-1.5M3 9v2.3M11 9v2.3M3.3 10.2h7.4" stroke="#c9a040" fill="none" stroke-width="0.8"/></svg><span>测量统计</span></div>
<div class="abs" style="left:0;top:40px;width:96px;height:1px;background:#cbcbcb"></div>
<div class="abs" style="left:0;top:60px;width:96px;height:1px;background:#cbcbcb"></div>
<div class="abs" style="left:0;top:80px;width:96px;height:1px;background:#cbcbcb"></div>
<div class="abs" style="left:0;top:100px;width:96px;height:1px;background:#cbcbcb"></div>
<div class="abs" style="left:0;top:120px;width:96px;height:1px;background:#cbcbcb"></div>
<div class="abs" style="left:0;top:139px;width:96px;height:1px;background:#cbcbcb"></div>
<div class="abs" style="left:0;top:159px;width:96px;height:1px;background:#cbcbcb"></div>
<div class="abs" style="left:0;top:179px;width:96px;height:1px;background:#cbcbcb"></div>
<div class="abs" style="left:0;top:199px;width:96px;height:1px;background:#cbcbcb"></div>
<div class="abs" style="left:0;top:219px;width:96px;height:1px;background:#cbcbcb"></div>
<div class="abs" style="left:0;top:239px;width:96px;height:1px;background:#cbcbcb"></div>
<div class="abs" style="left:0;top:258px;width:96px;height:1px;background:#cbcbcb"></div>
<div class="abs" style="left:0;top:278px;width:96px;height:1px;background:#cbcbcb"></div>
<div class="abs" style="left:0;top:298px;width:96px;height:1px;background:#cbcbcb"></div>
<div class="abs" style="left:0;top:318px;width:96px;height:1px;background:#cbcbcb"></div>
<div class="abs" style="left:0;top:338px;width:96px;height:1px;background:#cbcbcb"></div>
<div class="abs" style="left:0;top:358px;width:96px;height:1px;background:#cbcbcb"></div>
<div class="abs" style="left:0;top:377px;width:96px;height:1px;background:#cbcbcb"></div>
<div class="abs" style="left:0;top:397px;width:96px;height:1px;background:#cbcbcb"></div>
</div>
<div id="ftb" class="abs">
  <svg class="abs" style="left:0;top:0" width="267" height="22" viewBox="501 688 267 22">
   <g fill="none" stroke="#f0f0f0" stroke-width="1">
    <circle cx="510" cy="695.5" r="2.6"/><circle cx="516" cy="695.5" r="2.6"/><circle cx="510" cy="701.5" r="2.6"/><circle cx="516" cy="701.5" r="2.6"/>
   </g>
   <path d="M524.5 691v16" stroke="#777"/>
   <rect x="567" y="689" width="112" height="20" fill="#565656" stroke="#3c3c3c"/>
   <rect x="570.5" y="693.5" width="10" height="10" fill="#e8560c" stroke="#3a3a3a" stroke-width="0.6"/>
   <path d="M671 696.5h6l-3 3.5z" fill="#f0f0f0"/>
   <g fill="none" stroke="#e8e8e8" stroke-width="1.1">
    <path d="M695 694h-6.5v9.5h9.5v-4"/><path d="M690 692.5v-1h7.5"/><path d="M692.5 700l5-5"/>
    <path d="M713.5 692v12M707.5 698h12M711.5 694l2-2l2 2M711.5 702l2 2l2-2M709.5 696l-2 2l2 2M717.5 696l2 2l-2 2"/>
    <rect x="730" y="694.5" width="6" height="8" rx="1"/><path d="M732 694.5v-1.5a1 1 0 0 1 1-1h4a1 1 0 0 1 1 1v6a1 1 0 0 1-1 1h-1"/>
    <rect x="751" y="693" width="7" height="9" rx="1"/><rect x="754.5" y="697.5" width="6.5" height="6" rx="1" fill="#5a5a5a"/>
   </g>
  </svg>
  <div class="abs" style="left:26px;top:6px;font-size:9px;line-height:10px;color:#d8d8d8;white-space:nowrap">标注分类</div>
  <div class="abs" style="left:82px;top:6px;font-size:9px;line-height:10px;color:#f4f4f4;white-space:nowrap">未分类</div>
</div>
<div id="btabs" class="abs">
  <svg class="abs" style="left:0;top:0" width="120" height="16" viewBox="0 0 120 16">
    <path d="M0 0h54l-5 15h-44z" fill="#000"/>
    <path d="M52.5 0h51l-4.8 15h-41.4z" fill="#fcfcfc" stroke="#555" stroke-width="0.8"/>
  </svg>
  <div class="abs" style="left:18px;top:3px;font-size:9px;line-height:10px;color:#f0f0f0">模型</div>
  <div class="abs" style="left:61px;top:3px;font-size:9px;line-height:10px;color:#222">建筑图纸</div>
</div>
<div id="status" class="abs">
  <div class="abs" style="left:6px;top:4px;font-family:'Liberation Mono';font-size:9px;letter-spacing:-1px;line-height:11px;color:#333;white-space:nowrap">x = -139433 y = 5499O9</div>
  <div class="abs" style="left:214px;top:2px;width:1px;height:17px;background:#d8d4cf"></div>
  <div class="abs" style="left:327px;top:4px;font-size:9px;line-height:11px;color:#333;white-space:nowrap">模型中的标注比例:1</div>
  <div class="abs" style="left:324px;top:2px;width:1px;height:17px;background:#d8d4cf"></div>
  <div class="abs" style="left:1180px;top:2px;width:1px;height:17px;background:#d8d4cf"></div>
  <div class="abs" style="left:1202px;top:2px;width:1px;height:17px;background:#d8d4cf"></div>
  <div class="abs" style="left:1225px;top:2px;width:1px;height:17px;background:#d8d4cf"></div>
  <div class="abs" style="left:1247px;top:2px;width:1px;height:17px;background:#d8d4cf"></div>
  <svg class="abs" style="left:1180px;top:0" width="89" height="19" viewBox="1180 738 89 19">
   <g fill="none" stroke="#c9a040" stroke-width="1">
    <path d="M1190 742.5h-2.5l-1 1v8.5h10v-3"/><path d="M1188.5 743v-0.5h5l2 2v3"/>
    <text x="1189" y="749" font-size="4" fill="#c9a040" stroke="none">PDF</text>
    <path d="M1211 744.5h-1.5l-1 1v6.5h9v-2"/><path d="M1210.5 745v-2h5.5"/><path d="M1213 749l4-4M1215 745h2v2"/>
   </g>
   <rect x="1231.2" y="741.8" width="12" height="11.5" rx="2" fill="#1796ea"/>
   <path d="M1233.5 747.5h3.5" stroke="#fff" stroke-width="1"/><circle cx="1239" cy="747.5" r="1.8" fill="none" stroke="#fff"/><path d="M1233.5 745v5" stroke="#fff"/>
   <rect x="1254.5" y="742.5" width="10.5" height="10.5" rx="1.5" fill="none" stroke="#4aa8ea" stroke-width="1"/>
   <path d="M1256.5 750.5h6.5" stroke="#2a98e6" stroke-width="1.2"/>
  </svg>
</div>
</body></html>
